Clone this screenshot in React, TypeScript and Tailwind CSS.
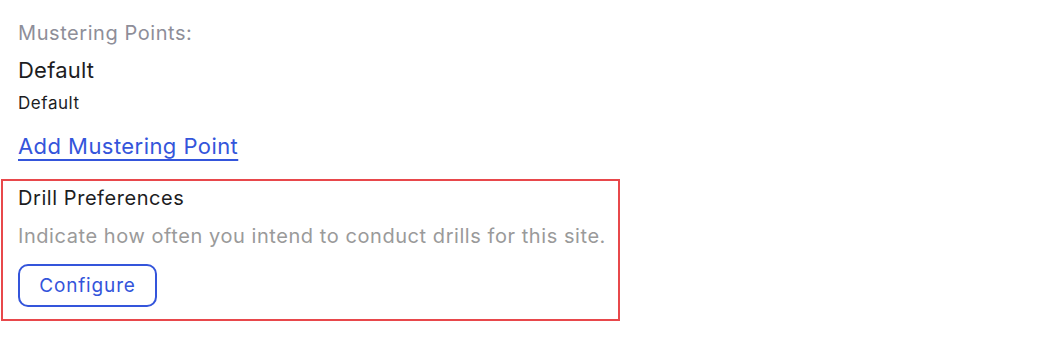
import React from "react";

const App = () => {
  return (
    <div
      className="w-[1049px] h-[340px] bg-white pl-[18px] pt-[20px] tracking-[0.035em]"
      style={{ fontFamily: "Inter, 'Noto Sans', sans-serif" }}
    >
      <p className="text-[20px] leading-[26px] text-[#8e8e99]">Mustering Points:</p>
      <p className="mt-[10px] text-[22px] leading-[28px] text-[#1d1d1f] tracking-[0.01em]">Default</p>
      <p className="mt-[8px] text-[17px] leading-[22px] text-[#1d1d1f]">Default</p>
      <a
        href="#"
        className="mt-[18px] inline-block text-[22px] leading-[28px] text-[#3455db] tracking-[0.02em] underline underline-offset-[5px]"
      >
        Add Mustering Point
      </a>
      <div className="-ml-[17px] mt-[19px] w-[619px] h-[142px] border-2 border-[#e8484b] pl-[15px] pt-[4px]">
        <p className="text-[20px] leading-[26px] text-[#1d1d1f]">Drill Preferences</p>
        <p className="mt-[12px] text-[20px] leading-[26px] text-[#9a9a9a]">
          Indicate how often you intend to conduct drills for this site.
        </p>
        <button className="mt-[15px] w-[139px] h-[43px] pt-[2px] rounded-[10px] border-[2.5px] border-[#3455db] text-[19px] tracking-[0.045em] text-[#3455db] bg-white">
          Configure
        </button>
      </div>
    </div>
  );
};

export default App;
